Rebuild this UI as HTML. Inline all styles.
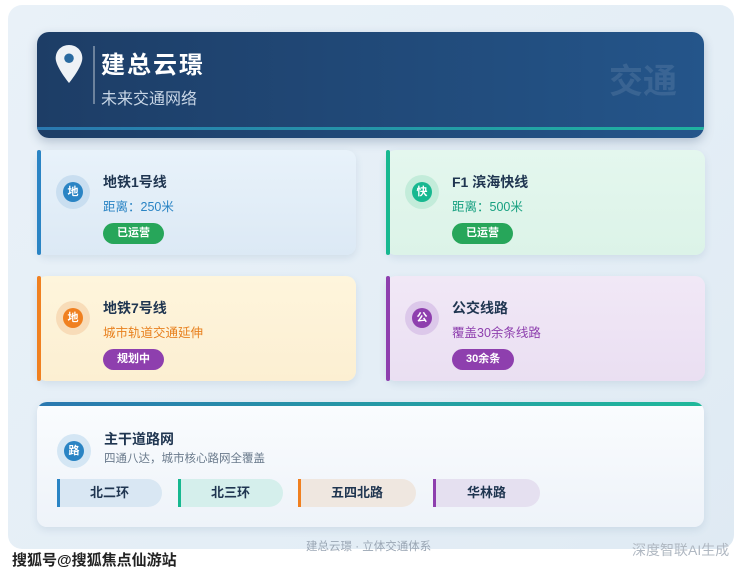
<!DOCTYPE html><html><head><meta charset="utf-8"><style>
*{margin:0;padding:0;box-sizing:border-box}
body{width:740px;height:576px;background:#fff;font-family:"Liberation Sans","Noto Sans CJK SC",sans-serif;position:relative;overflow:hidden}
.bg{position:absolute;left:8px;top:5px;width:726px;height:544px;border-radius:14px;background:linear-gradient(135deg,#e9f1f8,#e4eef6 60%,#dfeaf3)}
.hd{position:absolute;left:37px;top:32px;width:667px;height:106px;border-radius:12px;background:linear-gradient(90deg,#1d3d66,#24558a);box-shadow:0 4px 10px rgba(30,60,100,.25);overflow:hidden}
.hd .bar{position:absolute;left:0;right:0;bottom:8px;height:3px;background:linear-gradient(90deg,#2a78b0,#1fb3a0)}
.abs{position:absolute}
.card{position:absolute;width:319px;height:105px;border-radius:10px;box-shadow:0 3px 8px rgba(60,100,140,.12)}
.card .l{position:absolute;left:0;top:0;bottom:0;width:4px;border-radius:2px}
.ic{position:absolute;left:19px;top:25px;width:34px;height:34px;border-radius:50%}
.ic b{position:absolute;left:7px;top:7px;width:20px;height:20px;border-radius:50%;color:#fff;font-size:11px;text-align:center;line-height:20px}
.t{position:absolute;left:66px;top:22px;font-size:14px;font-weight:bold;color:#1f3550}
.s{position:absolute;left:66px;top:46px;font-size:12.5px}
.tag{position:absolute;left:66px;top:73px;height:21px;padding:0 14px;border-radius:11px;color:#fff;font-size:11px;font-weight:bold;line-height:21px}
.pill{position:absolute;top:479px;height:28px;border-radius:0 14px 14px 0;font-size:13px;font-weight:bold;color:#1f3550;text-align:center;line-height:28px}
.pill i{position:absolute;left:0;top:0;bottom:0;width:3px}
</style></head><body>
<div class="bg"></div>
<div class="hd"><div class="bar"></div>
<svg class="abs" style="left:17px;top:12px" width="30" height="40" viewBox="0 0 30 42"><path d="M15 1C7 1 1 7 1 15c0 9 14 26 14 26s14-17 14-26C29 7 23 1 15 1z" fill="#eef2f6"/><circle cx="15" cy="15" r="5" fill="#2a6aa0"/></svg>
<div class="abs" style="left:56px;top:14px;width:2px;height:58px;background:rgba(255,255,255,.35)"></div>
<div class="abs" style="left:64px;top:13px;font-size:24px;font-weight:bold;color:#fff;letter-spacing:2px">建总云璟</div>
<div class="abs" style="left:64px;top:53px;font-size:16px;color:#c8d6e6">未来交通网络</div>
<div class="abs" style="left:572px;top:22px;font-size:34px;font-weight:bold;color:rgba(255,255,255,.1)">交通</div>
</div>

<div class="card" style="left:37px;top:150px;background:linear-gradient(180deg,#e8f2fa,#dce9f5)"><div class="l" style="background:#2a84c4"></div>
<div class="ic" style="background:#c9def0"><b style="background:#2a84c4">地</b></div>
<div class="t">地铁1号线</div><div class="s" style="color:#2a84c4">距离：250米</div><div class="tag" style="background:#27a65a">已运营</div></div>

<div class="card" style="left:386px;top:150px;background:linear-gradient(180deg,#e4f7ee,#dcf3e8)"><div class="l" style="background:#17b890"></div>
<div class="ic" style="background:#c3ecda"><b style="background:#17b890">快</b></div>
<div class="t">F1 滨海快线</div><div class="s" style="color:#17a080">距离：500米</div><div class="tag" style="background:#27a65a">已运营</div></div>

<div class="card" style="left:37px;top:276px;background:linear-gradient(180deg,#fef5dc,#fcefd2)"><div class="l" style="background:#f08020"></div>
<div class="ic" style="background:#f8dcb8"><b style="background:#f08020">地</b></div>
<div class="t">地铁7号线</div><div class="s" style="color:#e8801e">城市轨道交通延伸</div><div class="tag" style="background:#8e3fae">规划中</div></div>

<div class="card" style="left:386px;top:276px;background:linear-gradient(180deg,#f1e8f6,#eadff2)"><div class="l" style="background:#8e3fae"></div>
<div class="ic" style="background:#dcc8ea"><b style="background:#8e3fae">公</b></div>
<div class="t">公交线路</div><div class="s" style="color:#8e3fae">覆盖30余条线路</div><div class="tag" style="background:#8e3fae">30余条</div></div>

<div class="abs" style="left:37px;top:402px;width:667px;height:125px;border-radius:10px;background:linear-gradient(180deg,#fafcfe,#eef3f9);box-shadow:0 3px 8px rgba(60,100,140,.12);overflow:hidden">
<div class="abs" style="left:0;right:0;top:0;height:4px;background:linear-gradient(90deg,#2a78b0,#1fb89a)"></div></div>
<div class="abs" style="left:57px;top:434px;width:34px;height:34px;border-radius:50%;background:#d4e6f4"><b class="abs" style="left:7px;top:7px;width:20px;height:20px;border-radius:50%;background:#2a84c4;color:#fff;font-size:11px;text-align:center;line-height:20px">路</b></div>
<div class="abs" style="left:104px;top:429px;font-size:14px;font-weight:bold;color:#1f3550">主干道路网</div>
<div class="abs" style="left:104px;top:450px;font-size:11.5px;color:#6a7a8c">四通八达，城市核心路网全覆盖</div>
<div class="pill" style="left:57px;width:105px;background:#d9e7f3"><i style="background:#2a84c4"></i>北二环</div>
<div class="pill" style="left:178px;width:105px;background:#d5efec"><i style="background:#17b890"></i>北三环</div>
<div class="pill" style="left:298px;width:118px;background:#efe7e0"><i style="background:#f08020"></i>五四北路</div>
<div class="pill" style="left:433px;width:107px;background:#e5e0f0"><i style="background:#8e3fae"></i>华林路</div>
<div class="abs" style="left:306px;top:538px;font-size:11.5px;color:#9aa6b4">建总云璟 · 立体交通体系</div>
<div class="abs" style="left:632px;top:540px;font-size:14px;color:#b0b8c2">深度智联AI生成</div>
<div class="abs" style="left:12px;top:549px;font-size:15px;color:#222;font-weight:bold;text-shadow:0 0 2px #fff,0 0 2px #fff">搜狐号@搜狐焦点仙游站</div>
</body></html>
